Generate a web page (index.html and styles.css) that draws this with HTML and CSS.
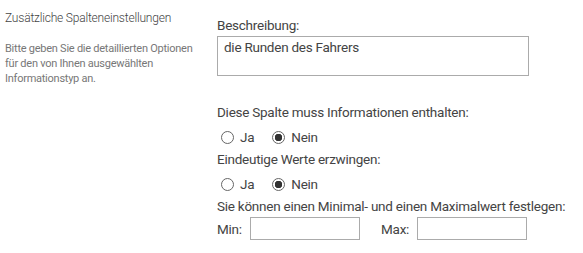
FILE: index.html
```html
<!DOCTYPE html>
<html lang="de">
<head>
  <meta charset="UTF-8">
  <title>Zusätzliche Spalteneinstellungen</title>
  <link rel="stylesheet" href="styles.css">
</head>
<body>
  <div class="section">
    <div class="aside">
      <h3 class="aside-title">Zusätzliche Spalteneinstellungen</h3>
      <p class="aside-text">Bitte geben Sie die detaillierten Optionen für den von Ihnen ausgewählten Informationstyp an.</p>
    </div>

    <div class="main">
      <div class="label">Beschreibung:</div>
      <textarea class="desc" rows="2">die Runden des Fahrers</textarea>

      <div class="label label-gap">Diese Spalte muss Informationen enthalten:</div>
      <div class="radios">
        <label><input type="radio" name="required"> Ja</label>
        <label><input type="radio" name="required" checked> Nein</label>
      </div>

      <div class="label">Eindeutige Werte erzwingen:</div>
      <div class="radios">
        <label><input type="radio" name="unique"> Ja</label>
        <label><input type="radio" name="unique" checked> Nein</label>
      </div>

      <div class="label">Sie können einen Minimal- und einen Maximalwert festlegen:</div>
      <div class="range">
        <label><span class="range-min">Min:</span><input type="text" class="num"></label>
        <label><span class="range-max">Max:</span><input type="text" class="num"></label>
      </div>
    </div>
  </div>
</body>
</html>
```

FILE: styles.css
```css
body {
  margin: 0;
  font-family: Roboto, 'Open Sans', sans-serif;
  color: #444;
  background: #fff;
}
.section {
  display: flex;
}
.aside {
  flex: none;
  width: 207px;
  padding: 9px 0 0 5px;
  box-sizing: border-box;
}
.aside-title {
  margin: 0;
  font-size: 12px;
  font-weight: 300;
  letter-spacing: -0.2px;
  line-height: 18px;
  color: #444;
  white-space: nowrap;
}
.aside-text {
  margin: 14px 0 0;
  font-size: 11px;
  letter-spacing: -0.25px;
  line-height: 15px;
  color: #777;
}
.main {
  flex: none;
  margin-left: 10px;
  padding-top: 15px;
  font-size: 13.5px;
  letter-spacing: -0.25px;
  white-space: nowrap;
}
.label {
  line-height: 20px;
}
.label-gap {
  margin-top: 26px;
}
.desc {
  display: block;
  box-sizing: border-box;
  width: 312px;
  height: 40px;
  margin: 1px 0 0;
  padding: 0 6px;
  border: 1px solid #ababab;
  font: inherit;
  letter-spacing: inherit;
  line-height: 20px;
  color: #444;
  resize: none;
}
.radios {
  display: flex;
  gap: 18px;
  height: 22px;
  margin: 4px 0 1px 4px;
  align-items: center;
}
.radios label {
  display: flex;
  align-items: center;
  gap: 6px;
}
.radios input {
  appearance: none;
  box-sizing: border-box;
  width: 13px;
  height: 13px;
  margin: 0;
  border: 1px solid #666;
  border-radius: 50%;
  background: #fff;
}
.radios input:checked {
  background: radial-gradient(circle, #333 0 3.5px, #fff 4px);
}
.range {
  display: flex;
  gap: 21px;
  margin-top: 1px;
}
.range label {
  display: flex;
  align-items: center;
}
.range-min {
  width: 33px;
}
.range-max {
  width: 36px;
}
.num {
  box-sizing: border-box;
  width: 110px;
  height: 23px;
  margin: 0;
  padding: 0 4px;
  border: 1px solid #ababab;
  font: inherit;
}
```
